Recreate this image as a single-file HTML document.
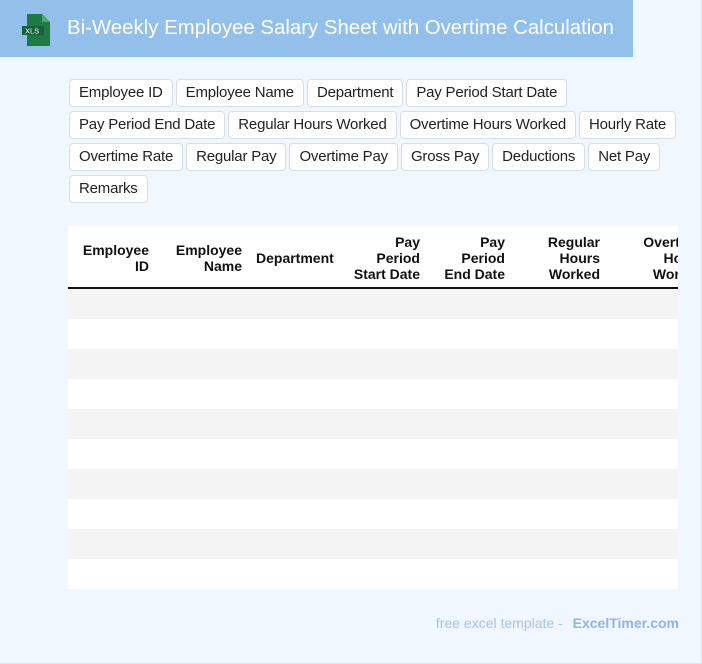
<!DOCTYPE html>
<html><head><style>
*{box-sizing:border-box;margin:0;padding:0}
body{width:702px;height:664px;background:#f0f7ff;font-family:"Liberation Sans",Arial,sans-serif;position:relative;overflow:hidden;border-right:1px solid #dde6f0;border-bottom:1px solid #dde6f0}
.hdr{position:absolute;left:0;top:0;width:633px;height:57px;background:#92c0ea}
.hdr h1{position:absolute;left:67px;top:17px;font-size:20.4px;font-weight:normal;color:#fff;white-space:nowrap}
.icon{position:absolute;left:22px;top:14px}
.chips{position:absolute;left:69px;top:79px;width:620px;display:flex;flex-wrap:wrap;gap:4px 3px}
.chip{height:28px;line-height:26px;padding:0 9px;border:1px solid #d6dde5;border-radius:4px;background:#fff;font-size:15px;letter-spacing:-0.2px;color:#222;white-space:nowrap}
.tbl{position:absolute;left:68px;top:226px;width:610px;height:363px;background:#fff;overflow:hidden}
.th{position:absolute;top:0;height:63px;border-bottom:2px solid #111;width:610px}
.th div{position:absolute;font-size:14px;font-weight:bold;color:#111;text-align:right;line-height:16px;white-space:nowrap}
.row{position:absolute;left:0;width:610px;height:30px}
.g{background:#f4f4f4}
.foot{position:absolute;right:22px;top:615px;font-size:14px;color:#a9c3e6}
.foot b{color:#8fb4e6;margin-left:6px}
</style></head><body>
<div class="hdr">
<svg class="icon" width="28" height="32" viewBox="0 0 28 32"><path d="M5 0h15l8 8v24H5z" fill="#1e7a44"/><path d="M20 0v8h8z" fill="#4aa86c"/><rect x="0" y="12" width="22" height="9" fill="#15603a"/><text x="3" y="19.5" font-size="7.5" fill="#fff" font-family="Liberation Sans">XLS</text></svg>
<h1>Bi-Weekly Employee Salary Sheet with Overtime Calculation</h1>
</div>
<div class="chips">
<span class="chip">Employee ID</span><span class="chip">Employee Name</span><span class="chip">Department</span><span class="chip">Pay Period Start Date</span>
<span class="chip">Pay Period End Date</span><span class="chip">Regular Hours Worked</span><span class="chip">Overtime Hours Worked</span><span class="chip">Hourly Rate</span>
<span class="chip">Overtime Rate</span><span class="chip">Regular Pay</span><span class="chip">Overtime Pay</span><span class="chip">Gross Pay</span><span class="chip">Deductions</span><span class="chip">Net Pay</span>
<span class="chip">Remarks</span>
</div>
<div class="tbl">
<div class="th">
<div style="right:529px;top:16px">Employee<br>ID</div>
<div style="right:436px;top:16px">Employee<br>Name</div>
<div style="left:188px;top:24px">Department</div>
<div style="right:258px;top:8px">Pay<br>Period<br>Start Date</div>
<div style="right:173px;top:8px">Pay<br>Period<br>End Date</div>
<div style="right:78px;top:8px">Regular<br>Hours<br>Worked</div>
<div style="right:-26px;top:8px">Overtime<br>Hours<br>Worked</div>
</div>
<div class="row g" style="top:63px"></div>
<div class="row g" style="top:123px"></div>
<div class="row g" style="top:183px"></div>
<div class="row g" style="top:243px"></div>
<div class="row g" style="top:303px"></div>
</div>
<div class="foot">free excel template - <b>ExcelTimer.com</b></div>
</body></html>
